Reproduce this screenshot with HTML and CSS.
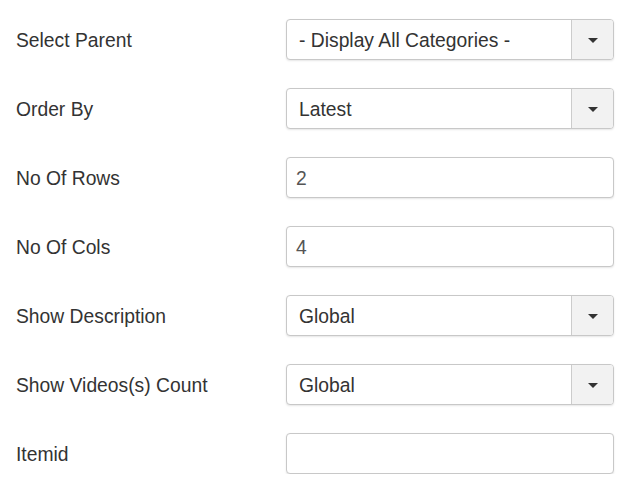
FILE: index.html
```html
<!DOCTYPE html>
<html>
<head>
<meta charset="utf-8">
<link rel="stylesheet" href="styles.css">
</head>
<body>
<div class="form">
  <div class="row">
    <div class="label">Select Parent</div>
    <div class="field select"><span class="value">- Display All Categories -</span><span class="btn"><span class="caret"></span></span></div>
  </div>
  <div class="row">
    <div class="label">Order By</div>
    <div class="field select"><span class="value">Latest</span><span class="btn"><span class="caret"></span></span></div>
  </div>
  <div class="row">
    <div class="label">No Of Rows</div>
    <div class="field input"><span class="value">2</span></div>
  </div>
  <div class="row">
    <div class="label">No Of Cols</div>
    <div class="field input"><span class="value">4</span></div>
  </div>
  <div class="row">
    <div class="label">Show Description</div>
    <div class="field select"><span class="value">Global</span><span class="btn"><span class="caret"></span></span></div>
  </div>
  <div class="row">
    <div class="label">Show Videos(s) Count</div>
    <div class="field select"><span class="value">Global</span><span class="btn"><span class="caret"></span></span></div>
  </div>
  <div class="row">
    <div class="label">Itemid</div>
    <div class="field input"><span class="value"></span></div>
  </div>
</div>
</body>
</html>
```
FILE: styles.css
```css
html, body {
  margin: 0;
  padding: 0;
  background: #fff;
}
.form {
  padding: 19px 0 0 16px;
  display: flex;
  flex-direction: column;
  gap: 28px;
  font-family: "Liberation Sans", Arial, sans-serif;
  font-size: 19.3px;
  color: #333;
}
.row {
  display: flex;
  align-items: center;
  height: 41px;
}
.label {
  width: 270px;
  flex: none;
  padding-top: 2px;
}
.field {
  width: 328px;
  height: 41px;
  box-sizing: border-box;
  border: 1px solid #c8c8c8;
  border-radius: 4px;
  box-shadow: 0 1px 2px rgba(0,0,0,0.1);
  display: flex;
  align-items: stretch;
  overflow: hidden;
  background: #fff;
}
.value {
  flex: 1;
  display: flex;
  align-items: center;
  padding-left: 12px;
  padding-top: 2px;
}
.input .value {
  padding-left: 9px;
  color: #555;
}
.btn {
  width: 41px;
  flex: none;
  border-left: 1px solid #ccc;
  background: #f2f2f2;
  display: flex;
  align-items: center;
  justify-content: center;
}
.caret {
  width: 0;
  height: 0;
  border-left: 5px solid transparent;
  border-right: 5px solid transparent;
  border-top: 5px solid #333;
  margin-top: 1px;
}
```
